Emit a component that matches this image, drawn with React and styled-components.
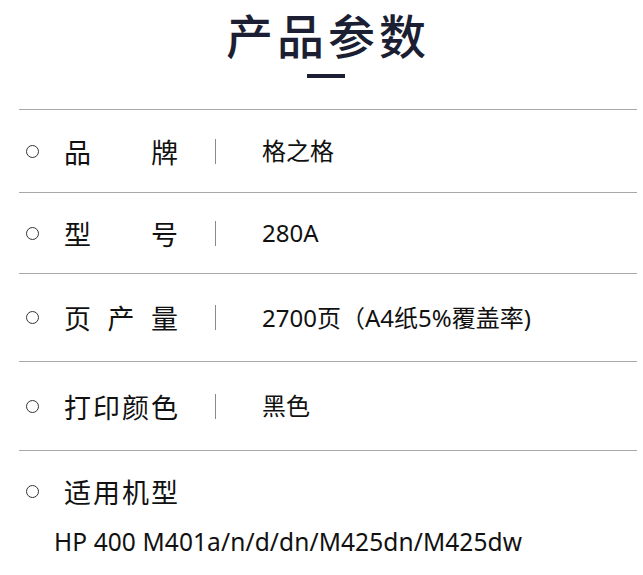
import React from 'react'
import styled, { createGlobalStyle } from 'styled-components'

const GlobalStyle = createGlobalStyle`
    body {
        margin: 0;
        background: #fff;
        font-family: "Noto Sans", "Noto Sans CJK SC", sans-serif;
        color: #111;
    }
`

const params = [
    { label: '品牌', value: '格之格', height: 82 },
    { label: '型号', value: '280A', height: 80 },
    { label: '页产量', value: '2700页（A4纸5%覆盖率)', height: 87 },
    { label: '打印颜色', value: '黑色', height: 88 },
]

const App = () => {
    return (
        <>
            <GlobalStyle />
            <Wrapper>
                <Title>产品参数</Title>
                <TitleBar />
                <List>
                    {params.map((p) => (
                        <Row key={p.label} height={p.height}>
                            <Dot />
                            <Label>
                                {p.label.split('').map((ch, i) => (
                                    <span key={i}>{ch}</span>
                                ))}
                            </Label>
                            <Divider />
                            <Value>{p.value}</Value>
                        </Row>
                    ))}
                </List>
                <ModelBlock>
                    <ModelHead>
                        <Dot />
                        <Label>
                            {'适用机型'.split('').map((ch, i) => (
                                <span key={i}>{ch}</span>
                            ))}
                        </Label>
                    </ModelHead>
                    <ModelText>HP 400 M401a/n/d/dn/M425dn/M425dw</ModelText>
                </ModelBlock>
            </Wrapper>
        </>
    )
}

const Wrapper = styled.div`
    width: 618px;
    margin-left: 19px;
    display: flex;
    flex-direction: column;
    align-items: center;
`

const Title = styled.h1`
    margin: -1px 0 0;
    font-family: "Noto Sans CJK SC", sans-serif;
    font-size: 47px;
    line-height: normal;
    font-weight: 500;
    letter-spacing: 4px;
    color: #1c1f33;
`

const TitleBar = styled.div`
    width: 38px;
    height: 4px;
    margin-top: 6px;
    margin-left: -4px;
    background: #1c1f33;
`

const List = styled.div`
    width: 100%;
    margin-top: 31px;
    border-top: 1px solid #a8a8a8;
`

const Row = styled.div`
    height: ${({ height }) => height}px;
    display: flex;
    align-items: center;
    border-bottom: 1px solid #a8a8a8;
`

const Dot = styled.span`
    flex: none;
    width: 11px;
    height: 11px;
    margin-left: 7px;
    border: 1.5px solid #333;
    border-radius: 50%;
`

const Label = styled.div`
    flex: none;
    width: 114px;
    margin-left: 25px;
    display: flex;
    justify-content: space-between;
    font-family: "Noto Sans CJK SC", sans-serif;
    font-size: 27px;
    line-height: 1;
    color: #111;
`

const Divider = styled.span`
    flex: none;
    width: 1px;
    height: 25px;
    margin-left: 37px;
    background: #8a8a8a;
`

const Value = styled.div`
    margin-left: 46px;
    font-size: 24px;
    line-height: 1;
    color: #111;
`

const ModelBlock = styled.div`
    width: 100%;
    display: flex;
    flex-direction: column;
`

const ModelHead = styled.div`
    height: 80px;
    display: flex;
    align-items: center;
`

const ModelText = styled.div`
    margin-left: 35px;
    margin-top: -1px;
    font-size: 24.5px;
    letter-spacing: 0.1px;
    line-height: 1;
    color: #111;
`

export default App
